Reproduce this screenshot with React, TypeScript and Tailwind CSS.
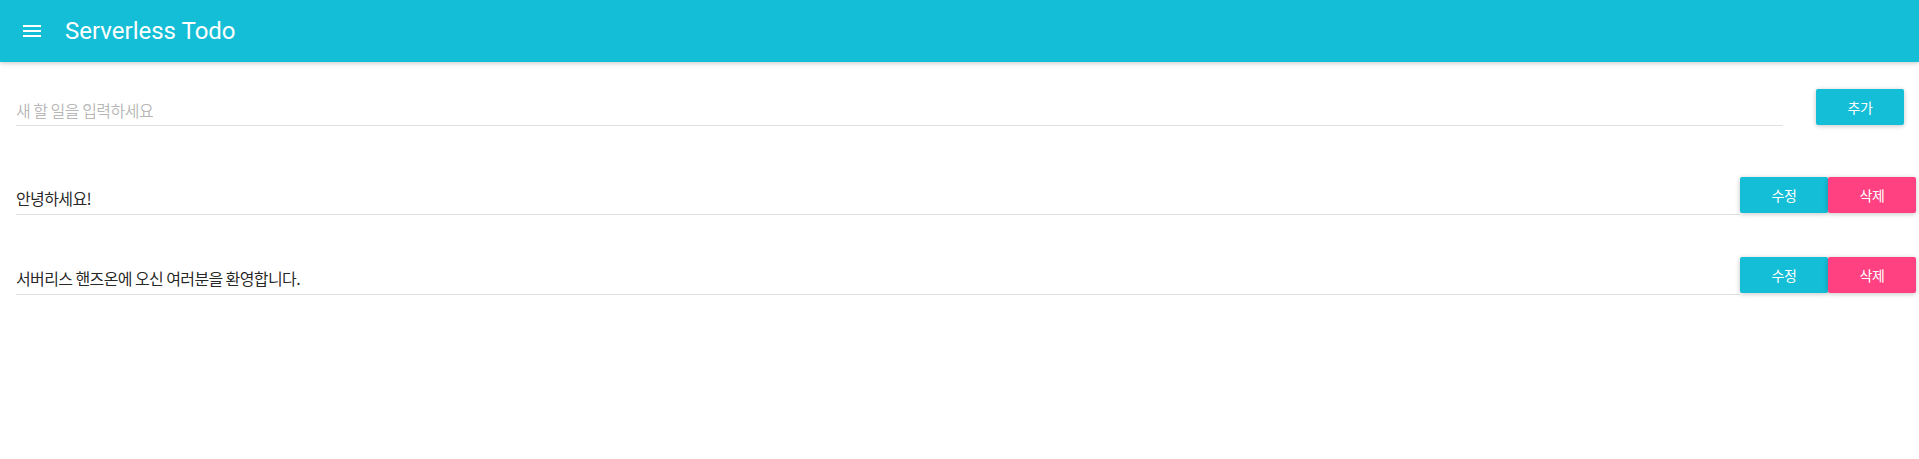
import React from "react";

const KR = { fontFamily: '"Noto Sans CJK KR", "Noto Sans", sans-serif' };

function Btn({ label, color }: { label: string; color: string }) {
  return (
    <button
      className={`h-[36px] w-[88px] rounded-[2px] text-[14px] text-white tracking-[-0.3px] shadow-[0_1px_6px_rgba(0,0,0,0.12),0_1px_4px_rgba(0,0,0,0.12)] ${color}`}
      style={KR}
    >
      {label}
    </button>
  );
}

function Row({ text }: { text: string }) {
  return (
    <div className="flex items-start pr-[3px]">
      <div className="flex-1 h-[38px] border-b border-[#e0e0e0] pt-[9px] text-[16px] leading-[24px] tracking-[-0.6px] text-[rgba(0,0,0,0.87)]" style={KR}>
        {text}
      </div>
      <div className="flex">
        <Btn label="수정" color="bg-[#14bed6]" />
        <Btn label="삭제" color="bg-[#ff4081]" />
      </div>
    </div>
  );
}

export default function App() {
  return (
    <div className="w-[1919px] h-[459px] bg-white overflow-hidden">
      <header className="h-[62px] bg-[#14bed6] flex items-center shadow-[0_1px_6px_rgba(0,0,0,0.12),0_1px_4px_rgba(0,0,0,0.12)] relative z-10">
        <svg className="ml-[20px]" width="24" height="24" viewBox="0 0 24 24" fill="white">
          <path d="M3 18h18v-2H3v2zm0-5h18v-2H3v2zm0-7v2h18V6H3z" />
        </svg>
        <h1 className="ml-[21px] text-[24px] text-white font-normal leading-[62px]" style={{ fontFamily: 'Roboto, "Liberation Sans", sans-serif' }}>
          Serverless Todo
        </h1>
      </header>
      <main className="pl-[16px]">
        <div className="flex items-start pt-[27px] pr-[15px]">
          <div className="flex-1 h-[37px] border-b border-[#e0e0e0] pt-[9px] text-[16px] leading-[24px] tracking-[-0.5px] text-[rgba(0,0,0,0.3)]" style={KR}>
            새 할 일을 입력하세요
          </div>
          <div className="ml-[33px]">
            <Btn label="추가" color="bg-[#14bed6]" />
          </div>
        </div>
        <div className="mt-[51px]">
          <Row text="안녕하세요!" />
        </div>
        <div className="mt-[42px]">
          <Row text="서버리스 핸즈온에 오신 여러분을 환영합니다." />
        </div>
      </main>
    </div>
  );
}
